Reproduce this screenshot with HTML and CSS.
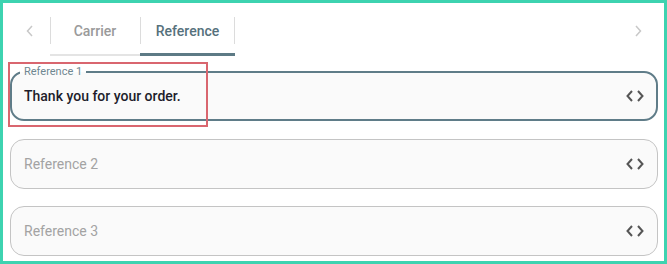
FILE: index.html
```html
<!DOCTYPE html>
<html>
<head>
<meta charset="utf-8">
<link rel="stylesheet" href="styles.css">
</head>
<body>
<div class="frame">
  <div class="tabbar">
    <div class="nav">
      <svg width="10" height="14" viewBox="0 0 10 14"><path d="M7 2 L2.5 7 L7 12" fill="none" stroke="#c8c8c8" stroke-width="1.5"/></svg>
    </div>
    <div class="tabs">
      <div class="tab">Carrier</div>
      <div class="tab active">Reference</div>
    </div>
    <div class="spacer"></div>
    <div class="nav">
      <svg width="10" height="14" viewBox="0 0 10 14"><path d="M3 2 L7.5 7 L3 12" fill="none" stroke="#c8c8c8" stroke-width="1.5"/></svg>
    </div>
  </div>
  <div class="fields">
    <div class="field focused">
      <span class="label">Reference 1</span>
      <span class="value">Thank you for your order.</span>
      <svg class="code" width="18" height="12" viewBox="0 0 18 12"><path d="M6 1 L1.5 6 L6 11 M12 1 L16.5 6 L12 11" fill="none" stroke="#555" stroke-width="2"/></svg>
    </div>
    <div class="field">
      <span class="placeholder">Reference 2</span>
      <svg class="code" width="18" height="12" viewBox="0 0 18 12"><path d="M6 1 L1.5 6 L6 11 M12 1 L16.5 6 L12 11" fill="none" stroke="#555" stroke-width="2"/></svg>
    </div>
    <div class="field">
      <span class="placeholder">Reference 3</span>
      <svg class="code" width="18" height="12" viewBox="0 0 18 12"><path d="M6 1 L1.5 6 L6 11 M12 1 L16.5 6 L12 11" fill="none" stroke="#555" stroke-width="2"/></svg>
    </div>
  </div>
  <div class="highlight"></div>
</div>
</body>
</html>
```
FILE: styles.css
```css
* { box-sizing: border-box; }
html, body { margin: 0; padding: 0; background: #fff; }
body { font-family: Roboto, "Liberation Sans", Arial, sans-serif; }
.frame {
  position: relative;
  width: 667px;
  height: 264px;
  border: 3px solid #3dd3b0;
  padding: 0 6px 0 7px;
  overflow: hidden;
}
.tabbar {
  display: flex;
  padding-top: 14px;
  height: 53px;
}
.nav {
  width: 40px;
  height: 28px;
  display: flex;
  align-items: center;
  justify-content: center;
}
.tabs { display: flex; }
.tab {
  position: relative;
  height: 39px;
  line-height: 28px;
  font-size: 14px;
  font-weight: 500;
  color: #9a9a9a;
  text-align: center;
  border-bottom: 2px solid #e4e4e4;
}
.tab:first-child { width: 90px; }
.tab.active { width: 95px; color: #56717c; border-bottom: 3px solid #5d7a85; }
.tab::before, .tab.active::after {
  content: "";
  position: absolute;
  top: 0;
  height: 27px;
  width: 1px;
  background: #dcdcdc;
}
.tab::before { left: 0; }
.tab.active::after { right: 0; }
.spacer { flex: 1; }
.fields {
  display: flex;
  flex-direction: column;
  gap: 17px;
  margin-top: 15px;
}
.field {
  position: relative;
  height: 50px;
  border: 1px solid #c4c4c4;
  border-radius: 14px;
  background: #fafafa;
  display: flex;
  align-items: center;
  padding: 0 13px 0 13px;
}
.field.focused {
  border: 2px solid #5f7c88;
  padding: 0 12px 0 12px;
  margin-bottom: 1px;
}
.label {
  position: absolute;
  left: 8px;
  top: -8px;
  padding: 0 4px;
  font-size: 11px;
  line-height: 14px;
  color: #6f8791;
  background: linear-gradient(#fff 50%, #fafafa 50%);
}
.value {
  flex: 1;
  font-size: 14px;
  font-weight: 500;
  color: #1d1d2b;
}
.placeholder {
  flex: 1;
  font-size: 14px;
  color: #a3a3a3;
}
.code { display: block; }
.highlight {
  position: absolute;
  left: 5px;
  top: 59px;
  width: 200px;
  height: 65px;
  border: 2px solid #d9666f;
}
```
